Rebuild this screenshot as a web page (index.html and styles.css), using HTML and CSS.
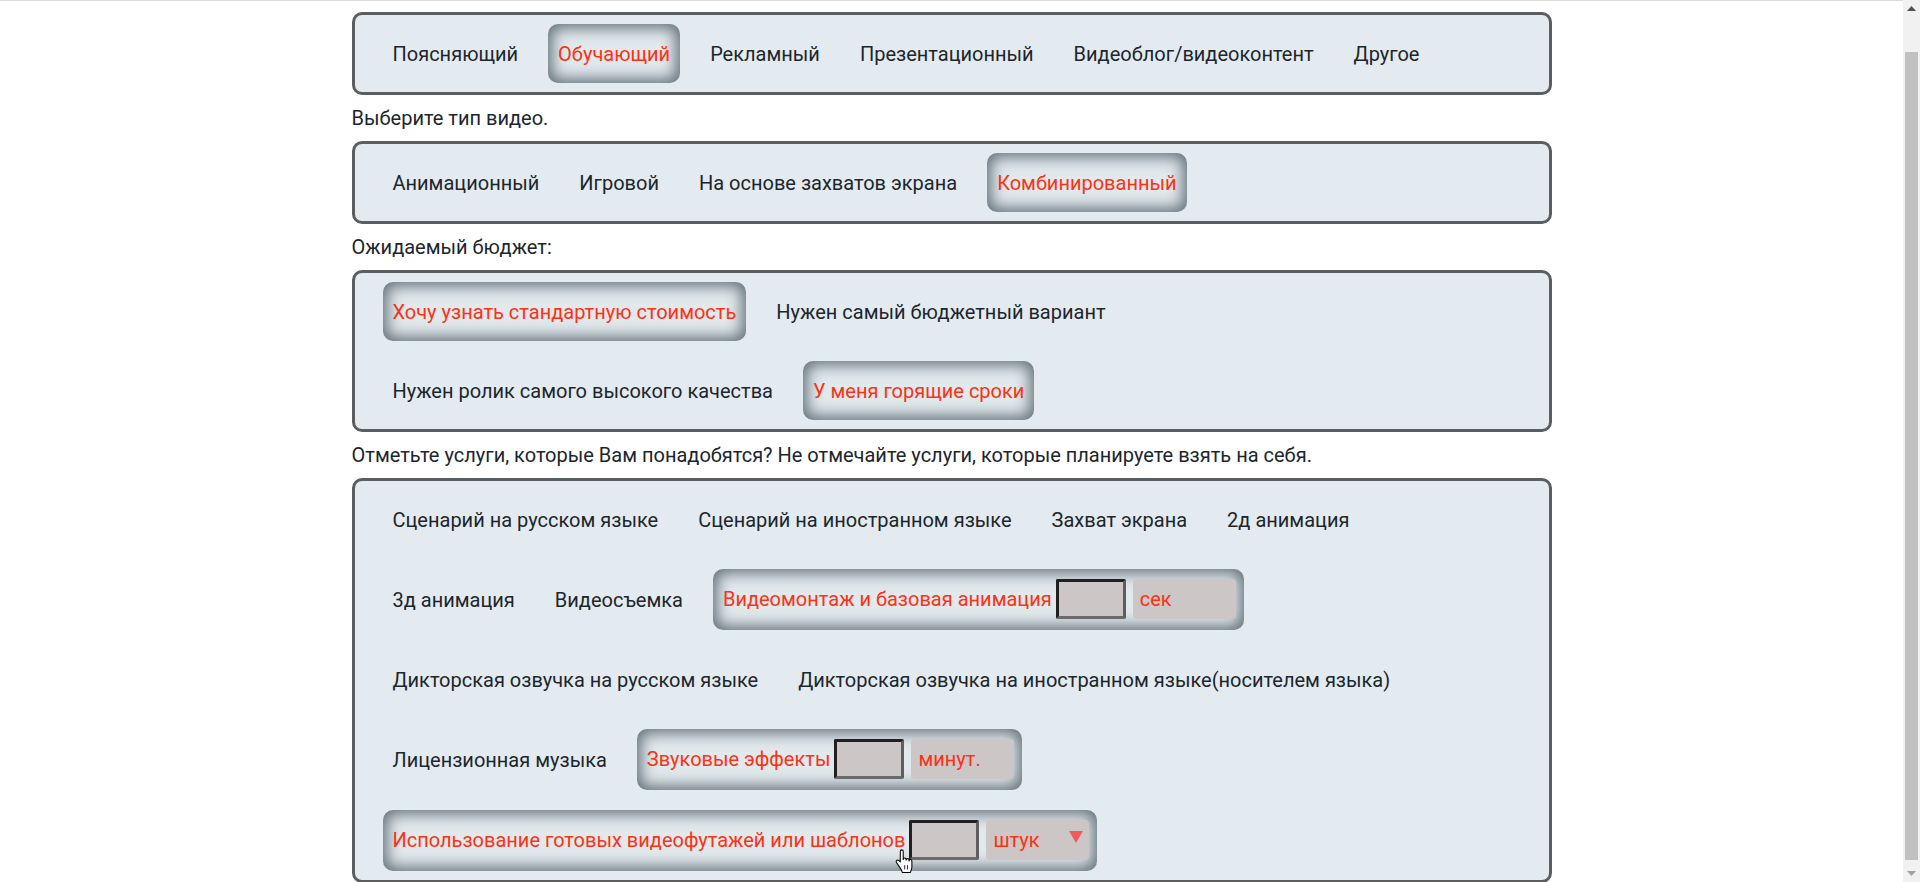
FILE: index.html
```html
<!DOCTYPE html>
<html lang="ru">
<head>
<meta charset="utf-8">
<title>Заявка на видео</title>
<link rel="stylesheet" href="styles.css">
</head>
<body>
<div class="screen">
<div class="page">
<main class="form">
  <div class="group">
    <div class="row">
      <span class="opt">Поясняющий</span>
      <span class="opt opt--on">Обучающий</span>
      <span class="opt">Рекламный</span>
      <span class="opt">Презентационный</span>
      <span class="opt">Видеоблог/видеоконтент</span>
      <span class="opt">Другое</span>
    </div>
  </div>
  <p class="caption">Выберите тип видео.</p>
  <div class="group">
    <div class="row">
      <span class="opt">Анимационный</span>
      <span class="opt">Игровой</span>
      <span class="opt">На основе захватов экрана</span>
      <span class="opt opt--on">Комбинированный</span>
    </div>
  </div>
  <p class="caption">Ожидаемый бюджет:</p>
  <div class="group">
    <div class="row">
      <span class="opt opt--on">Хочу узнать стандартную стоимость</span>
      <span class="opt">Нужен самый бюджетный вариант</span>
    </div>
    <div class="row">
      <span class="opt">Нужен ролик самого высокого качества</span>
      <span class="opt opt--on">У меня горящие сроки</span>
    </div>
  </div>
  <p class="caption">Отметьте услуги, которые Вам понадобятся? Не отмечайте услуги, которые планируете взять на себя.</p>
  <div class="group">
    <div class="row">
      <span class="opt">Сценарий на русском языке</span>
      <span class="opt">Сценарий на иностранном языке</span>
      <span class="opt">Захват экрана</span>
      <span class="opt">2д анимация</span>
    </div>
    <div class="row">
      <span class="opt">3д анимация</span>
      <span class="opt">Видеосъемка</span>
      <span class="opt opt--on opt--field">Видеомонтаж и базовая анимация <input class="num" type="text"><span class="unit">сек</span></span>
    </div>
    <div class="row">
      <span class="opt">Дикторская озвучка на русском языке</span>
      <span class="opt">Дикторская озвучка на иностранном языке(носителем языка)</span>
    </div>
    <div class="row">
      <span class="opt">Лицензионная музыка</span>
      <span class="opt opt--on opt--field">Звуковые эффекты <input class="num" type="text"><span class="unit">минут.</span></span>
    </div>
    <div class="row">
      <span class="opt opt--on opt--field">Использование готовых видеофутажей или шаблонов <input class="num" type="text"><span class="unit">штук<svg class="caret" width="14" height="12" viewBox="0 0 14 12"><path d="M0 0h14L7 12z" fill="#f25a5a"/></svg></span>
        <svg class="cursor" width="19" height="28" viewBox="0 0 18 26"><path d="M6.5 1.5c-.8 0-1.5.7-1.5 1.5v10l-1.3-1.4c-.6-.6-1.6-.6-2.2 0-.5.5-.5 1.3-.1 1.9l3.6 5.3c.8 1.2 1.6 2.6 2 4.2h7.5c.5-1.6 1.5-3.3 1.5-5.3v-5.7c0-.8-.6-1.4-1.4-1.4-.7 0-1.3.6-1.3 1.4v-.8c0-.8-.6-1.4-1.4-1.4s-1.4.6-1.4 1.4v-.6c0-.8-.6-1.4-1.4-1.4s-1.3.6-1.3 1.4V3c0-.8-.7-1.5-1.5-1.5z" fill="#fff" stroke="#000" stroke-width="1" stroke-linejoin="round"/><path d="M9.2 16v4M11.8 16v4" stroke="#000" stroke-width="0.8"/></svg>
      </span>
    </div>
  </div>
</main>
</div>
<div class="scrollbar">
  <div class="sb-btn"><svg width="9" height="5" viewBox="0 0 9 5"><path d="M0 5L4.5 0 9 5z" fill="#505050"/></svg></div>
  <div class="sb-track"><div class="sb-thumb"></div></div>
  <div class="sb-btn"><svg width="9" height="5" viewBox="0 0 9 5"><path d="M0 0h9L4.5 5z" fill="#a3a3a3"/></svg></div>
</div>
</div>
</body>
</html>
```

FILE: styles.css
```css
html, body {
  margin: 0;
  padding: 0;
  overflow: hidden;
}
body {
  font-family: Roboto, "Liberation Sans", sans-serif;
  font-size: 20px;
  color: #1c262c;
  background: #ffffff;
}
.screen {
  display: flex;
  height: 882px;
}
.page {
  flex: 1;
  min-width: 0;
  overflow: hidden;
  border-top: 1px solid #dcdcdc;
}
.form {
  width: 1200px;
  margin: 0 auto;
  padding: 11px 0 9px;
}
.group {
  border: 3px solid #5b5e61;
  border-radius: 10px;
  background: #e3ebf0;
  padding: 9px 28px;
  display: flex;
  flex-direction: column;
  row-gap: 20px;
}
.row {
  display: flex;
  align-items: center;
  column-gap: 20px;
}
.caption {
  margin: 0;
  height: 46px;
  box-sizing: border-box;
  padding-top: 12px;
  line-height: 23px;
}
.opt {
  position: relative;
  display: flex;
  align-items: center;
  height: 59px;
  box-sizing: border-box;
  padding: 0 10px;
  border-radius: 10px;
  white-space: nowrap;
}
.opt--on {
  color: #fb3214;
  background: #e2e9ed;
  box-shadow: inset 0 0 15px 4px #5f6e76;
}
.opt--field {
  height: 61px;
  padding: 10px 8px 11px 10px;
}
.num {
  width: 70px;
  height: 40px;
  box-sizing: border-box;
  margin: 0 7px 0 4px;
  border: 3px solid;
  border-color: #202020 #5e5e5e #6a6a6a #202020;
  border-radius: 2px;
  background: #cdc6c6;
  padding: 0;
}
.unit {
  display: flex;
  align-items: center;
  justify-content: space-between;
  width: 103px;
  height: 40px;
  box-sizing: border-box;
  padding: 0 6px 0 7px;
  border-radius: 4px;
  background: #cdc6c6;
  color: #fb3214;
}
.caret {
  margin-top: -6px;
}
.cursor {
  position: absolute;
  left: 512px;
  top: 38px;
}
.scrollbar {
  width: 17px;
  flex: none;
  display: flex;
  flex-direction: column;
  background: #f1f1f1;
}
.sb-btn {
  height: 17px;
  flex: none;
  display: flex;
  align-items: center;
  justify-content: center;
}
.sb-track {
  flex: 1;
  padding: 35px 2px 0;
}
.sb-thumb {
  height: 808px;
  background: #c1c1c1;
}
```
